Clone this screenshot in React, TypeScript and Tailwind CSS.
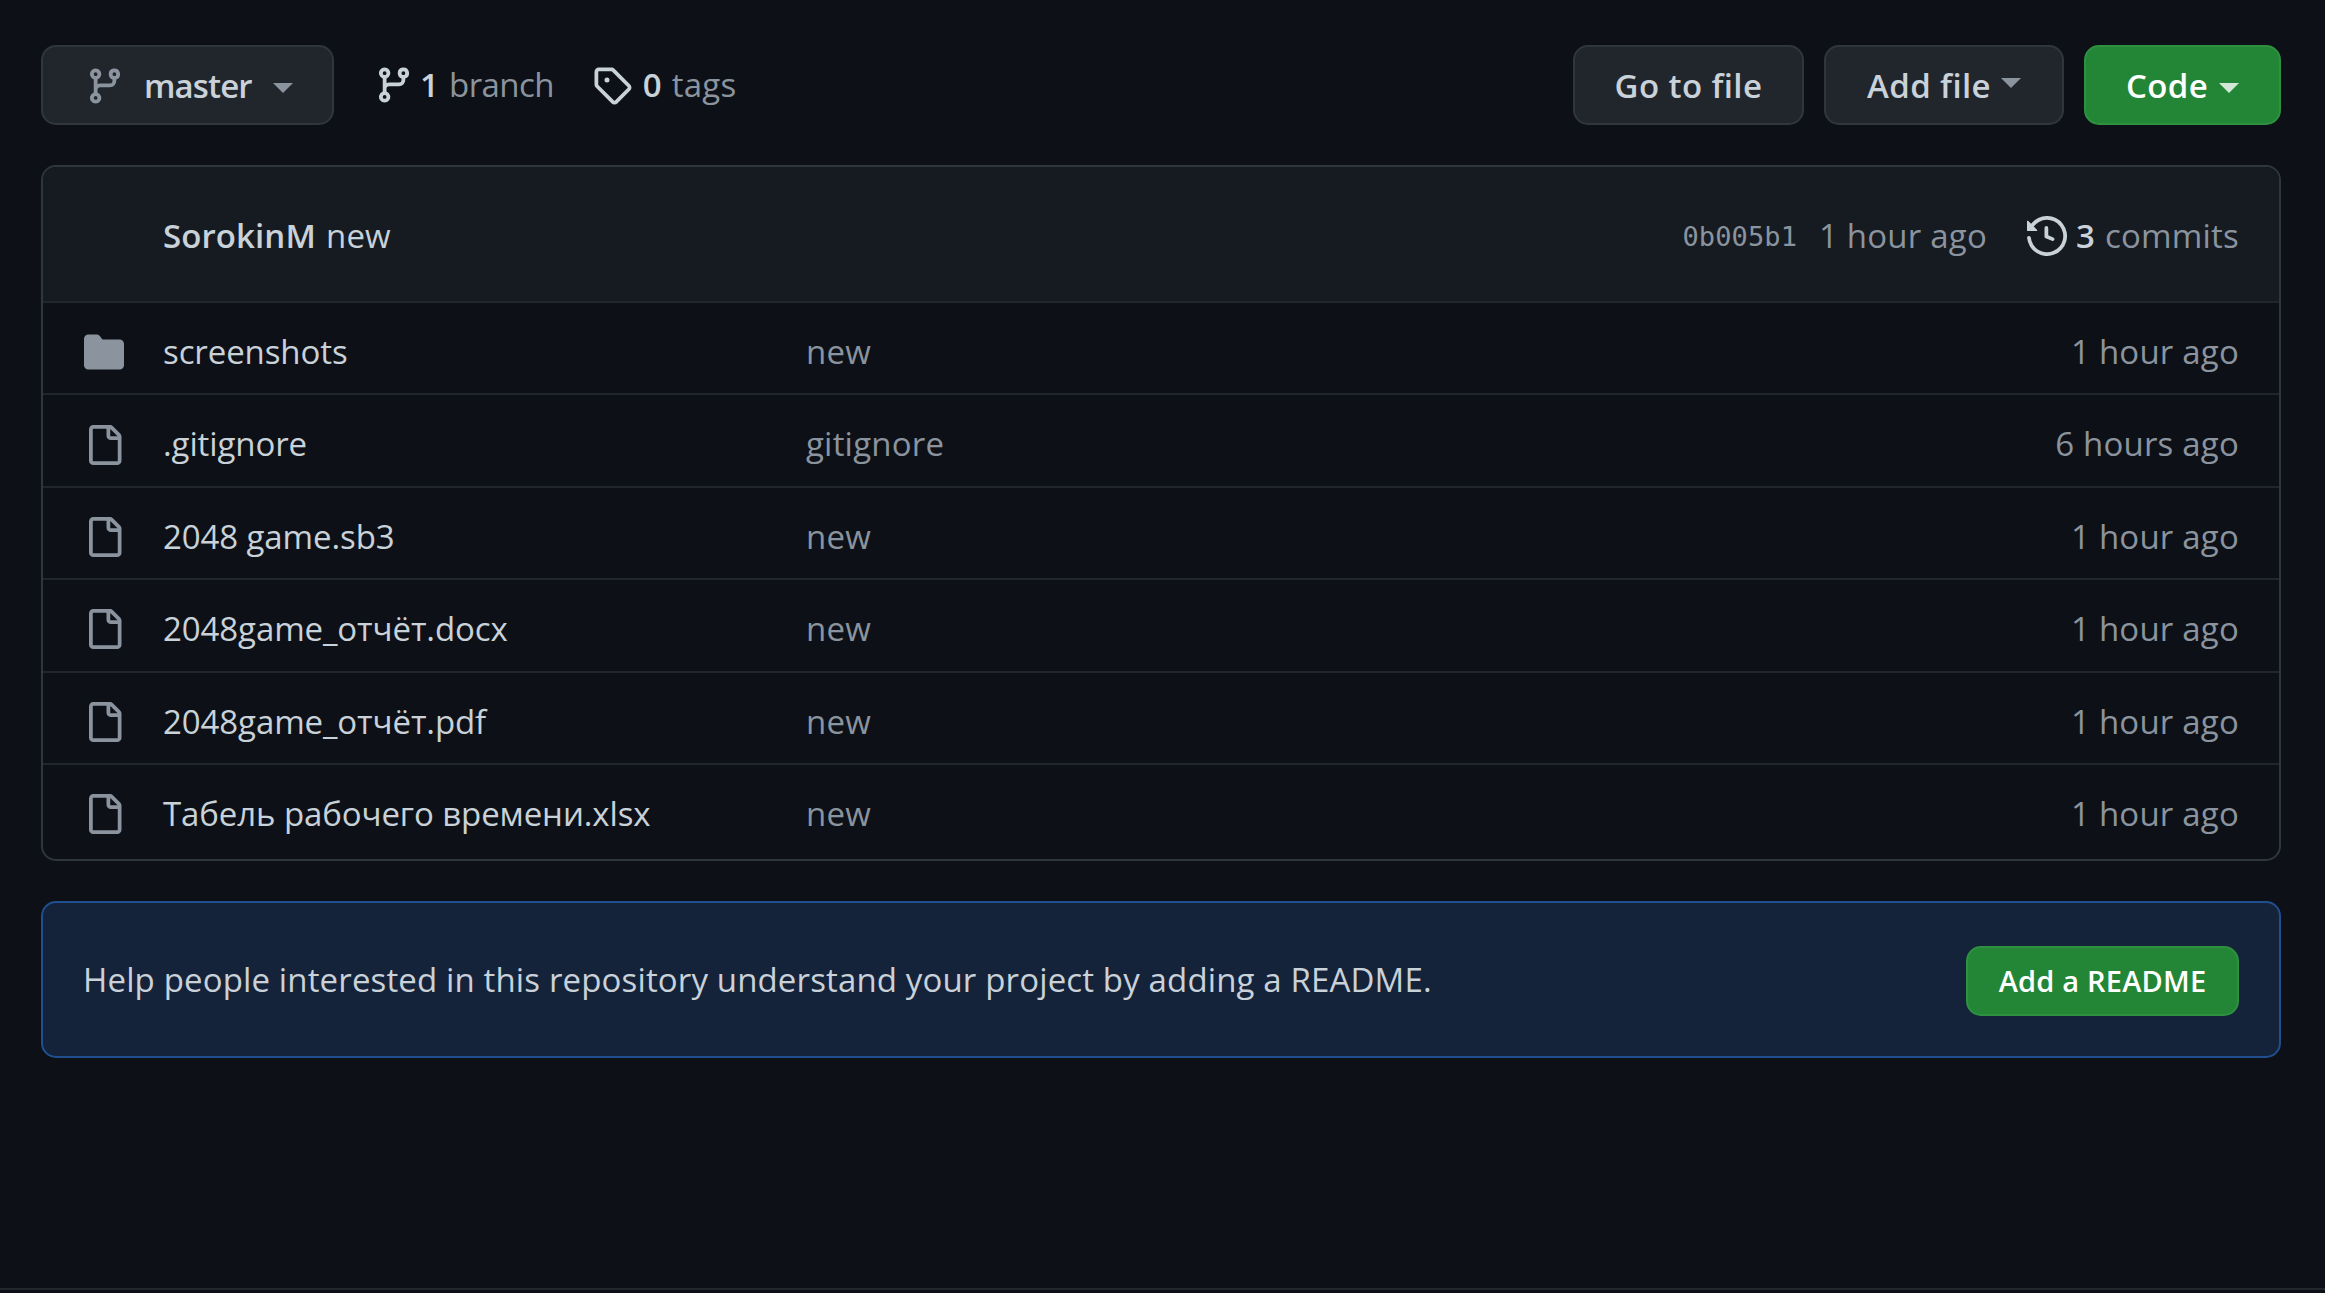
const branchPath =
  "M9.5 3.25a2.25 2.25 0 1 1 3 2.122V6A2.5 2.5 0 0 1 10 8.5H6a1 1 0 0 0-1 1v1.128a2.251 2.251 0 1 1-1.5 0V5.372a2.25 2.25 0 1 1 1.5 0v1.836A2.493 2.493 0 0 1 6 7h4a1 1 0 0 0 1-1v-.628A2.25 2.25 0 0 1 9.5 3.25Zm-6 0a.75.75 0 1 0 1.5 0 .75.75 0 0 0-1.5 0Zm8.25-.75a.75.75 0 1 0 0 1.5.75.75 0 0 0 0-1.5ZM4.25 12a.75.75 0 1 0 0 1.5.75.75 0 0 0 0-1.5Z";
const tagPath =
  "M1 7.775V2.75C1 1.784 1.784 1 2.75 1h5.025c.464 0 .91.184 1.238.513l6.25 6.25a1.75 1.75 0 0 1 0 2.474l-5.026 5.026a1.75 1.75 0 0 1-2.474 0l-6.25-6.25A1.752 1.752 0 0 1 1 7.775Zm1.5 0c0 .066.026.13.073.177l6.25 6.25a.25.25 0 0 0 .354 0l5.025-5.025a.25.25 0 0 0 0-.354l-6.25-6.25a.25.25 0 0 0-.177-.073H2.75a.25.25 0 0 0-.25.25ZM6 5a1 1 0 1 1 0 2 1 1 0 0 1 0-2Z";
const historyPath =
  "m.427 1.927 1.215 1.215a8.002 8.002 0 1 1-1.6 5.685.75.75 0 1 1 1.493-.154 6.5 6.5 0 1 0 1.18-4.458l1.358 1.358A.25.25 0 0 1 3.896 6H.25A.25.25 0 0 1 0 5.75V2.104a.25.25 0 0 1 .427-.177ZM7.75 4a.75.75 0 0 1 .75.75v2.992l2.028.812a.75.75 0 0 1-.557 1.392l-2.5-1A.751.751 0 0 1 7 8.25v-3.5A.75.75 0 0 1 7.75 4Z";
const folderPath =
  "M1.75 1A1.75 1.75 0 0 0 0 2.75v10.5C0 14.216.784 15 1.75 15h12.5A1.75 1.75 0 0 0 16 13.25v-8.5A1.75 1.75 0 0 0 14.25 3H7.5a.25.25 0 0 1-.2-.1l-.9-1.2C6.07 1.26 5.55 1 5 1H1.75Z";
const filePath =
  "M2 1.75C2 .784 2.784 0 3.75 0h6.586c.464 0 .909.184 1.237.513l2.914 2.914c.329.328.513.773.513 1.237v9.586A1.75 1.75 0 0 1 13.25 16h-9.5A1.75 1.75 0 0 1 2 14.25Zm1.75-.25a.25.25 0 0 0-.25.25v12.5c0 .138.112.25.25.25h9.5a.25.25 0 0 0 .25-.25V6h-2.75A1.75 1.75 0 0 1 9 4.25V1.5Zm6.75.062V4.25c0 .138.112.25.25.25h2.688l-.011-.013-2.914-2.914-.013-.011Z";

function Octicon({ d, className }: { d: string; className: string }) {
  return (
    <svg viewBox="0 0 16 16" fill="currentColor" className={className}>
      <path d={d} />
    </svg>
  );
}

function Caret({ className }: { className: string }) {
  return <span className={`inline-block border-x-[10px] border-t-[10px] border-x-transparent ${className}`} />;
}

const rows = [
  { name: "screenshots", message: "new", age: "1 hour ago", folder: true },
  { name: ".gitignore", message: "gitignore", age: "6 hours ago" },
  { name: "2048 game.sb3", message: "new", age: "1 hour ago" },
  { name: "2048game_отчёт.docx", message: "new", age: "1 hour ago" },
  { name: "2048game_отчёт.pdf", message: "new", age: "1 hour ago" },
  { name: "Табель рабочего времени.xlsx", message: "new", age: "1 hour ago" },
];

export default function App() {
  return (
    <div className="h-[1293px] flex flex-col bg-[#0d1117] text-[#c9d1d9] font-['Open_Sans',sans-serif] text-[33px] tracking-[0.2px] overflow-hidden">
      <div className="flex-1 pt-[45px] pl-[41px] pr-[44px]">
        {/* Toolbar */}
        <div className="flex items-center h-[80px]">
          <button className="flex items-center h-full w-[293px] pl-[42px] pt-[1px] rounded-[15px] border-2 border-[#30363d] bg-[#21262d] font-semibold tracking-[-0.9px]">
            <Octicon d={branchPath} className="w-[40px] h-[40px] text-[#8b949e]" />
            <span className="ml-[19px]">master</span>
            <Caret className="ml-[21px] mt-[4px] border-t-[#8b949e]" />
          </button>
          <div className="flex items-center ml-[40px] -mt-[1px]">
            <Octicon d={branchPath} className="w-[40px] h-[40px]" />
            <span className="ml-[6px] font-semibold">1</span>
            <span className="ml-[10px] text-[#8b949e] tracking-[-0.6px]">branch</span>
          </div>
          <div className="flex items-center ml-[38px] -mt-[1px]">
            <Octicon d={tagPath} className="w-[40px] h-[40px]" />
            <span className="ml-[11px] font-semibold">0</span>
            <span className="ml-[10px] text-[#8b949e]">tags</span>
          </div>
          <button className="ml-auto h-full w-[231px] pt-[1px] rounded-[15px] border-2 border-[#30363d] bg-[#21262d] font-semibold tracking-[0.4px]">
            Go to file
          </button>
          <button className="flex items-center justify-center gap-[10px] ml-[20px] pt-[1px] h-full w-[240px] rounded-[15px] border-2 border-[#30363d] bg-[#21262d] font-semibold tracking-[0.4px]">
            Add file
            <Caret className="-mt-[6px] border-t-[#8b949e]" />
          </button>
          <button className="flex items-center justify-center gap-[11px] ml-[20px] pt-[1px] h-full w-[197px] rounded-[15px] border-2 border-[#2e9140] bg-[#238636] text-white font-semibold tracking-[0.4px]">
            Code
            <Caret className="mt-[4px] border-t-[#d3e7d7]" />
          </button>
        </div>

        {/* File list */}
        <div className="mt-[40px] rounded-[15px] border-2 border-[#30363d] overflow-hidden">
          <div className="flex items-center h-[134px] pt-[3px] pl-[120px] pr-[40px] bg-[#161b22]">
            <span className="font-semibold tracking-[0.1px]">SorokinM</span>
            <span className="ml-[10px]">new</span>
            <span className="ml-auto text-[#8b949e] font-['DejaVu_Sans_Mono',monospace] text-[27px] tracking-[0.1px] mt-[3px]">0b005b1</span>
            <span className="ml-[22px] text-[#8b949e]">1 hour ago</span>
            <Octicon d={historyPath} className="ml-[40px] w-[40px] h-[40px]" />
            <span className="ml-[9px] font-semibold">3</span>
            <span className="ml-[10px] text-[#8b949e]">commits</span>
          </div>
          {rows.map((row) => (
            <div key={row.name} className="flex items-center h-[92.4px] last:h-[96px] pt-[7px] last:pb-[3.6px] pl-[41px] pr-[40px] border-t-2 border-[#21262d]">
              <Octicon d={row.folder ? folderPath : filePath} className="mt-[1px] w-[40px] h-[40px] shrink-0 text-[#8b949e]" />
              <span className="ml-[39px] w-[643px] shrink-0 tracking-[-0.1px]">{row.name}</span>
              <span className="text-[#8b949e]">{row.message}</span>
              <span className="ml-auto text-[#8b949e]">{row.age}</span>
            </div>
          ))}
        </div>

        {/* README prompt */}
        <div className="flex items-center justify-between mt-[40px] h-[157px] pl-[40px] pr-[40px] rounded-[15px] border-2 border-[#1f4f8f] bg-[#15233a]">
          <span className="mt-[1px] tracking-[0.14px]">Help people interested in this repository understand your project by adding a README.</span>
          <button className="mt-[3px] h-[70px] w-[273px] rounded-[15px] border-2 border-[#2e9140] bg-[#238636] text-white text-[29px] font-semibold tracking-[0.2px]">
            Add a README
          </button>
        </div>
      </div>
      <div className="h-[5px] border-t-2 border-[#21262d]" />
    </div>
  );
}
